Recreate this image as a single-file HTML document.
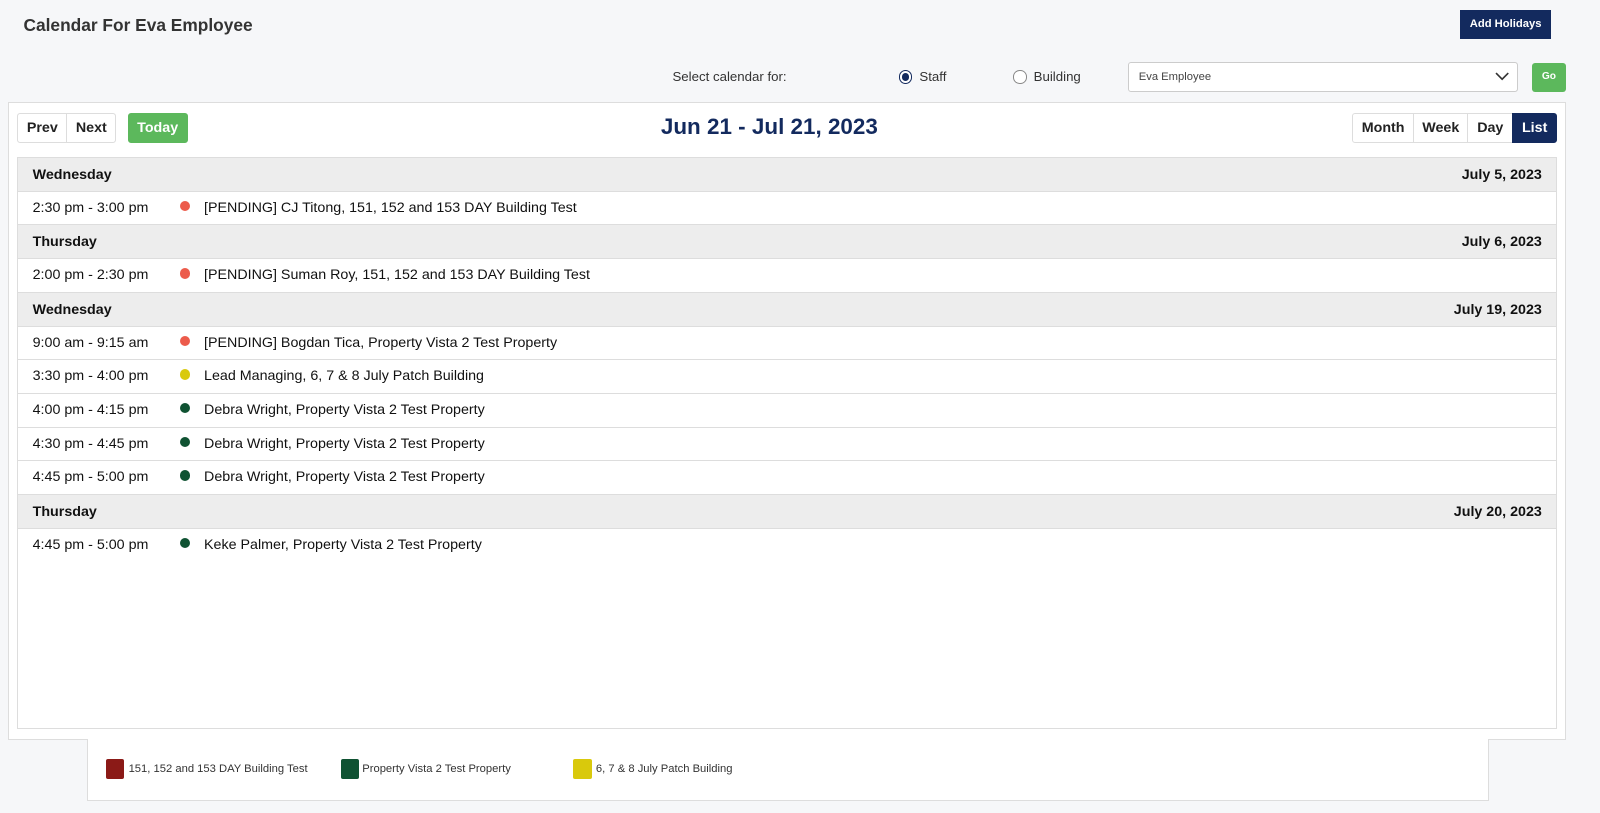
<!DOCTYPE html>
<html><head><style>
*{box-sizing:border-box;margin:0;padding:0}
html,body{width:1600px;height:813px;background:#f6f7f9;overflow:hidden}
#w{zoom:1.0204;position:relative;width:1568px;height:797px;font-family:"Liberation Sans",sans-serif;color:#111}
.abs{position:absolute}
h1{position:absolute;left:23px;top:15px;font-size:17px;font-weight:bold;color:#333}
.addh{left:1431px;top:10px;width:89px;height:28px;background:#132a5e;color:#fff;font-size:11px;font-weight:bold;text-align:center;line-height:28px}
.lbl{font-size:13px;color:#333;top:68px}
.radio{width:13px;height:13px;border:1px solid #888;border-radius:50%;background:#fff;top:69px}
.sel{left:1105px;top:61px;width:383px;height:29px;background:#fff;border:1px solid #ccc;border-radius:3px;font-size:11px;color:#444;padding:8px 10px}
.go{left:1501px;top:62px;width:34px;height:28px;background:#5cb85c;color:#fff;font-size:10px;font-weight:bold;text-align:center;line-height:28px;border-radius:3px}
.panel{left:8px;top:100px;width:1527px;height:625px;background:#fff;border:1px solid #ddd}
.btn{top:111px;height:29px;border:1px solid #ddd;background:#fff;font-size:14px;font-weight:bold;line-height:29px;text-align:center;color:#222}
.title{left:0;width:1508px;top:112px;text-align:center;font-size:22px;font-weight:bold;color:#132a5e}
.list{left:17px;top:154px;width:1509px;height:560px;border:1px solid #ddd;background:#fff}
.row{height:33px;border-bottom:1px solid #ddd;position:relative;font-size:14px;line-height:32px}
.hdr{background:#ededed;font-weight:bold;line-height:34px}
.hdr .l{position:absolute;left:14px}
.hdr .r{position:absolute;right:14px}
.t{position:absolute;left:14px}
.d{position:absolute;left:158px;top:9px;width:10px;height:10px;border-radius:50%}
.n{position:absolute;left:182px}
.legend{left:85px;top:724px;width:1374px;height:61px;background:#fff;border:1px solid #ddd;border-top:none}
.sw{top:744px;width:18px;height:19px;border-radius:2px}
.lt{top:748px;font-size:11px;color:#333}
</style></head><body><div id="w">
<h1>Calendar For Eva Employee</h1>
<div class="abs addh">Add Holidays</div>
<div class="abs lbl" style="left:659px">Select calendar for:</div>
<div class="abs radio" style="left:881px;border:1px solid #132a5e"><div style="position:absolute;left:2px;top:2px;width:7px;height:7px;border-radius:50%;background:#132a5e"></div></div>
<div class="abs lbl" style="left:901px">Staff</div>
<div class="abs radio" style="left:993px"></div>
<div class="abs lbl" style="left:1013px">Building</div>
<div class="abs sel">Eva Employee<svg style="position:absolute;right:8px;top:8px" width="14" height="10" viewBox="0 0 14 10"><path d="M1 2l6 6 6-6" fill="none" stroke="#333" stroke-width="1.6"/></svg></div>
<div class="abs go">Go</div>
<div class="abs panel"></div>
<div class="abs btn" style="left:17px;width:49px;border-radius:3px 0 0 3px">Prev</div>
<div class="abs btn" style="left:65px;width:49px;border-radius:0 3px 3px 0">Next</div>
<div class="abs btn" style="left:125px;width:59px;background:#5cb85c;border-color:#5cb85c;color:#fff;border-radius:3px">Today</div>
<div class="abs title">Jun 21 - Jul 21, 2023</div>
<div class="abs btn" style="left:1325px;width:61px;border-radius:3px 0 0 3px">Month</div>
<div class="abs btn" style="left:1385px;width:54px">Week</div>
<div class="abs btn" style="left:1438px;width:45px">Day</div>
<div class="abs btn" style="left:1482px;width:44px;background:#132a5e;border-color:#132a5e;color:#fff;border-radius:0 3px 3px 0">List</div>
<div class="abs list">
<div class="row hdr"><span class="l">Wednesday</span><span class="r">July 5, 2023</span></div>
<div class="row"><span class="t">2:30 pm - 3:00 pm</span><span class="d" style="background:#ec5b4b"></span><span class="n">[PENDING] CJ Titong, 151, 152 and 153 DAY Building Test</span></div>
<div class="row hdr"><span class="l">Thursday</span><span class="r">July 6, 2023</span></div>
<div class="row"><span class="t">2:00 pm - 2:30 pm</span><span class="d" style="background:#ec5b4b"></span><span class="n">[PENDING] Suman Roy, 151, 152 and 153 DAY Building Test</span></div>
<div class="row hdr"><span class="l">Wednesday</span><span class="r">July 19, 2023</span></div>
<div class="row"><span class="t">9:00 am - 9:15 am</span><span class="d" style="background:#ec5b4b"></span><span class="n">[PENDING] Bogdan Tica, Property Vista 2 Test Property</span></div>
<div class="row"><span class="t">3:30 pm - 4:00 pm</span><span class="d" style="background:#d9c90c"></span><span class="n">Lead Managing, 6, 7 &amp; 8 July Patch Building</span></div>
<div class="row"><span class="t">4:00 pm - 4:15 pm</span><span class="d" style="background:#0f5232"></span><span class="n">Debra Wright, Property Vista 2 Test Property</span></div>
<div class="row"><span class="t">4:30 pm - 4:45 pm</span><span class="d" style="background:#0f5232"></span><span class="n">Debra Wright, Property Vista 2 Test Property</span></div>
<div class="row"><span class="t">4:45 pm - 5:00 pm</span><span class="d" style="background:#0f5232"></span><span class="n">Debra Wright, Property Vista 2 Test Property</span></div>
<div class="row hdr"><span class="l">Thursday</span><span class="r">July 20, 2023</span></div>
<div class="row" style="border-bottom:none"><span class="t">4:45 pm - 5:00 pm</span><span class="d" style="background:#0f5232"></span><span class="n">Keke Palmer, Property Vista 2 Test Property</span></div>
</div>
<div class="abs legend"></div>
<div class="abs sw" style="left:104px;background:#8b1a17"></div>
<div class="abs lt" style="left:126px">151, 152 and 153 DAY Building Test</div>
<div class="abs sw" style="left:334px;background:#0f5232"></div>
<div class="abs lt" style="left:355px">Property Vista 2 Test Property</div>
<div class="abs sw" style="left:562px;background:#d9c90c"></div>
<div class="abs lt" style="left:584px">6, 7 &amp; 8 July Patch Building</div>
</div></body></html>
